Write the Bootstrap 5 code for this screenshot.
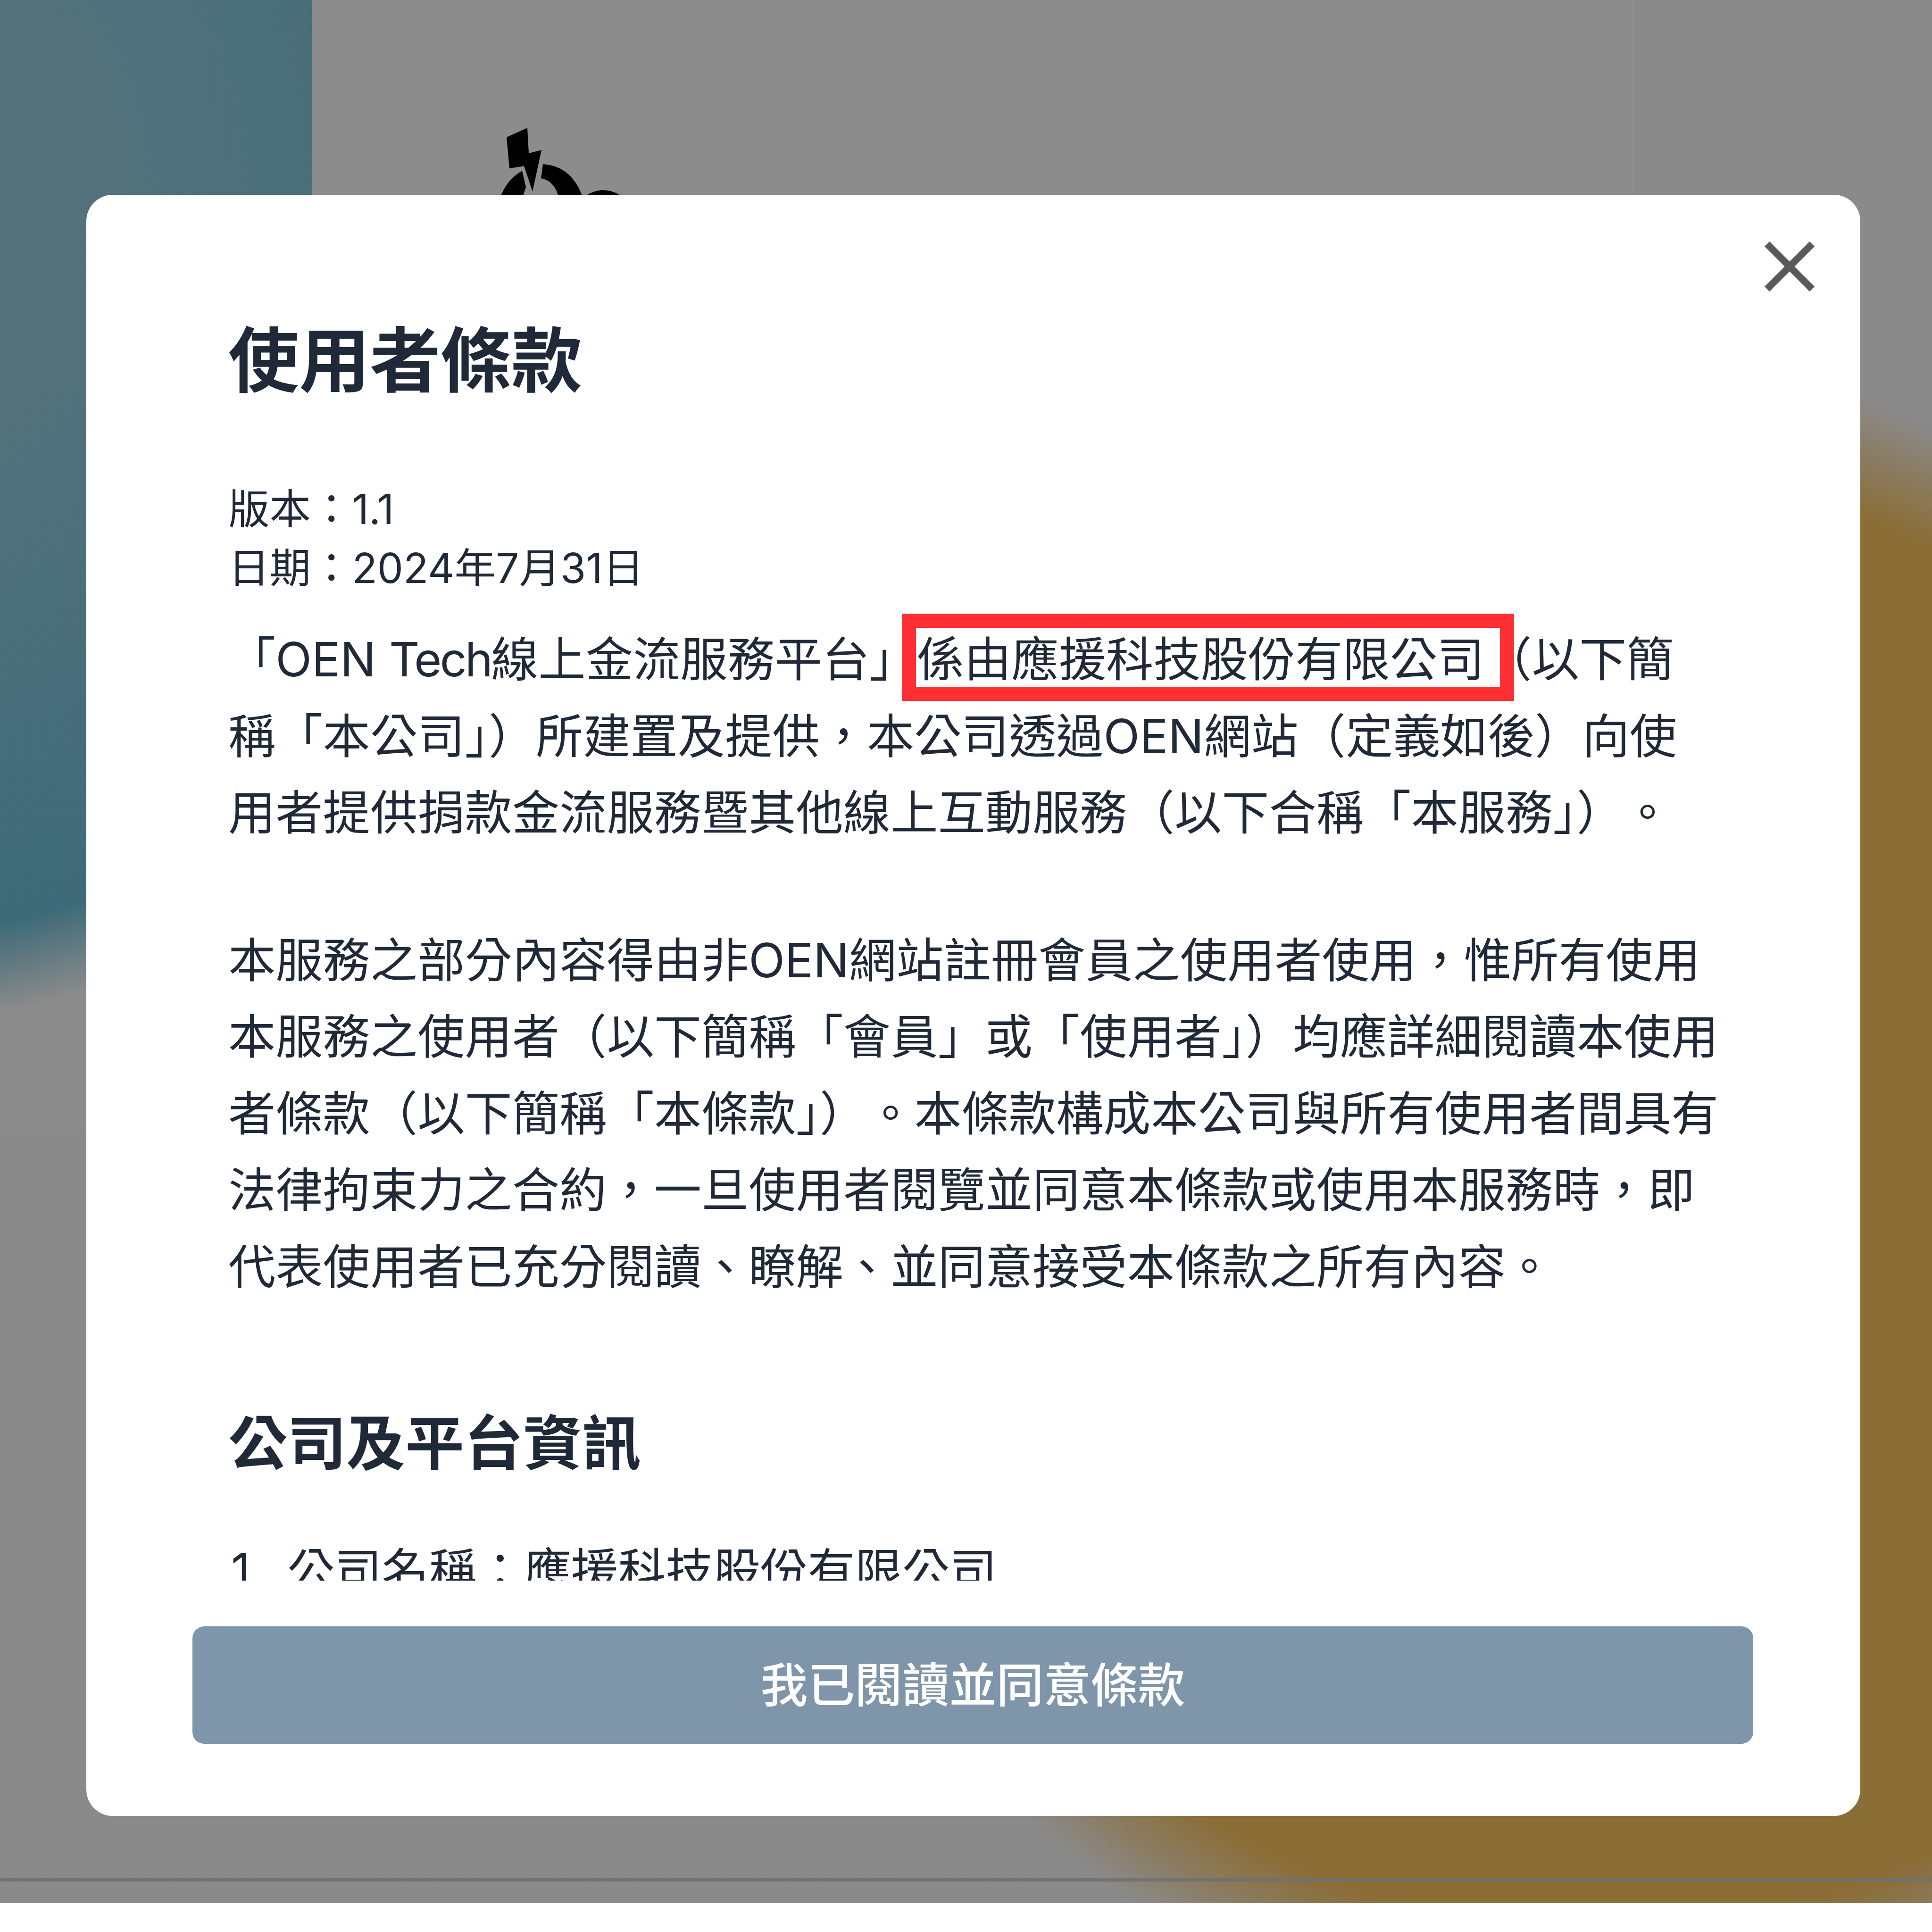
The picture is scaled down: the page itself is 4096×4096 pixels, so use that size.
<!DOCTYPE html>
<html lang="zh-Hant">
<head>
<meta charset="utf-8">
<title>使用者條款</title>
<link href="https://cdn.jsdelivr.net/npm/bootstrap@5.3.0/dist/css/bootstrap.min.css" rel="stylesheet">
<style>
html, body { margin: 0; background: #fff; }
body { font-family: Inter, "Noto Sans CJK TC", sans-serif; color: #1f2937; }
.stage {
  height: 4035px;
  overflow: hidden;
  background:
    linear-gradient(rgba(112,112,112,.85), rgba(112,112,112,.85)) 0 3981px / 100% 8px no-repeat,
    radial-gradient(circle 1790px at 3395px 2545px, #8b6d36 0, #8b6d36 1550px, rgba(139,109,54,0) 1790px) no-repeat,
    radial-gradient(circle 1770px at -358px 416px, #54727b 500px, #3e6b79 1585px, #8b8b8b 1770px) 0 0 / 661px 2400px no-repeat,
    linear-gradient(#8c8c8c, #8c8c8c) 661px 0 / 2805px 900px no-repeat,
    #8a8a8a;
}
.brand-mark { top: 260px; left: 1050px; width: 280px; height: 160px; }
.terms-card {
  margin: 413px 0 0 183px;
  width: 3761px;
  height: 3437px;
  border-radius: 56px;
  z-index: 1;
}
.close-x { top: 99px; right: 97px; width: 106px; height: 106px; line-height: 0; }
.terms-body {
  height: 2938px;
  padding: 252px 227px 0 301px;
  font-size: 100.3px;
  line-height: 162.5px;
}
.terms-title { font-size: 150px; line-height: 200px; font-weight: 700; margin: 0 0 152px; color: #1f2937; }
.terms-meta { font-size: 87.5px; line-height: 125px; margin: 0 0 50px; }
.terms-para { margin: 0 0 150px; }
.tight-word { letter-spacing: -4px; }
.terms-sub { font-size: 125px; line-height: 175px; font-weight: 700; margin: 205px 0 102px; color: #1f2937; }
.list-num { width: 125px; flex: none; padding-left: 6px; }
.stop-gap { margin-left: 50px; }
.flagged { position: relative; }
.flagged::after {
  content: "";
  position: absolute;
  left: -32px;
  right: -63px;
  top: 50%;
  height: 185px;
  margin-top: -97px;
  border: 30px solid #ff3033;
  pointer-events: none;
}
.terms-foot { padding: 97px 227px 0 225px; }
.agree-btn {
  height: 249px;
  font-size: 100px;
  line-height: 1;
  font-weight: 500;
  border-radius: 25px;
  background: #7f95aa;
  border: 0;
  color: #fff;
}
</style>
</head>
<body>
<div class="stage position-relative">
  <svg class="brand-mark position-absolute" viewBox="1050 260 280 160" fill="#000" aria-hidden="true">
    <polygon points="1074,291 1118,271 1121,325 1148,318 1129,406 1111,352 1080,357"/>
    <path d="M1107 362 L1115 397 L1107 420 L1060 420 Q1074 381 1107 362Z"/>
    <path d="M1151 348 Q1213 352 1236 420 L1185 420 Q1176 383 1147 378Z"/>
    <path d="M1245 413 Q1279 393 1313 413 L1313 420 L1245 420Z"/>
  </svg>

  <div class="terms-card card border-0 position-relative d-flex flex-column bg-white">
    <button type="button" class="close-x btn p-0 border-0 position-absolute" aria-label="關閉">
      <svg width="106" height="106" viewBox="0 0 106 106" stroke="#595959" stroke-width="15" aria-hidden="true">
        <line x1="5.3" y1="5.3" x2="100.7" y2="100.7"/>
        <line x1="100.7" y1="5.3" x2="5.3" y2="100.7"/>
      </svg>
    </button>

    <div class="terms-body overflow-hidden">
      <h1 class="terms-title">使用者條款</h1>
      <p class="terms-meta">版本：1.1<br>日期：2024年7月31日</p>
      <p class="terms-para">「OEN <span class="tight-word">Tech</span>線上金流服務平台」<span class="flagged">係由應援科技股份有限公司</span>（以下簡<br>稱「本公司」）所建置及提供，本公司透過OEN網站（定義如後）向使<br>用者提供捐款金流服務暨其他線上互動服務（以下合稱「本服務」）<span class="stop-gap">。</span></p>
      <p class="terms-para mb-0">本服務之部分內容得由非OEN網站註冊會員之使用者使用，惟所有使用<br>本服務之使用者（以下簡稱「會員」或「使用者」）均應詳細閱讀本使用<br>者條款（以下簡稱「本條款」）<span class="stop-gap">。</span>本條款構成本公司與所有使用者間具有<br>法律拘束力之合約，一旦使用者閱覽並同意本條款或使用本服務時，即<br>代表使用者已充分閱讀、瞭解、並同意接受本條款之所有內容。</p>
      <h2 class="terms-sub">公司及平台資訊</h2>
      <ol class="list-unstyled m-0">
        <li class="d-flex"><span class="list-num">1.</span><span>公司名稱：應援科技股份有限公司</span></li>
      </ol>
    </div>

    <div class="terms-foot">
      <button type="button" class="agree-btn btn w-100 d-flex align-items-center justify-content-center">我已閱讀並同意條款</button>
    </div>
  </div>
</div>
<script src="https://cdn.jsdelivr.net/npm/bootstrap@5.3.0/dist/js/bootstrap.bundle.min.js"></script>
</body>
</html>
